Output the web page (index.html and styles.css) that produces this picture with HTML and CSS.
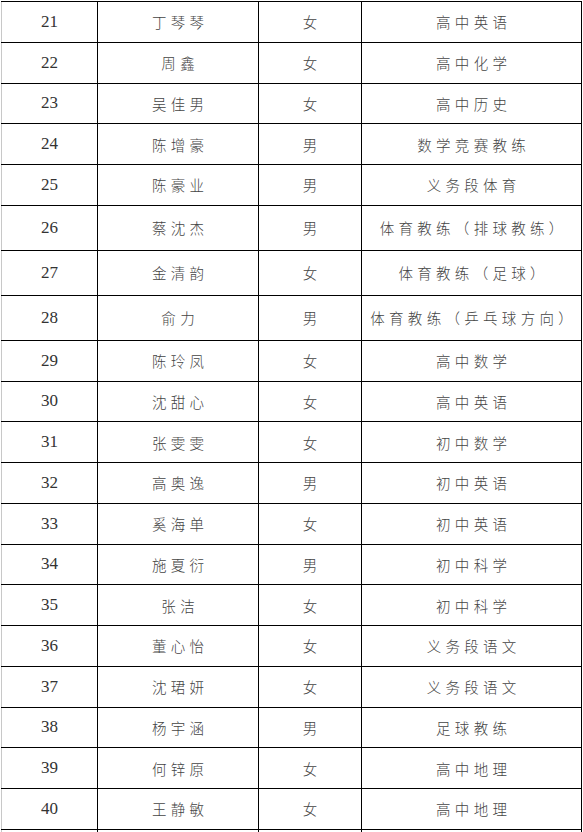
FILE: index.html
```html
<!DOCTYPE html>
<html lang="zh-CN">
<head>
<meta charset="utf-8">
<title>名单</title>
<link rel="stylesheet" href="styles.css">
</head>
<body>
<table class="roster">
  <colgroup>
    <col class="c-no"><col class="c-name"><col class="c-sex"><col class="c-subj">
  </colgroup>
  <tbody>
    <tr><td class="no">21</td><td class="cn"><span>丁琴琴</span></td><td class="cn"><span>女</span></td><td class="cn"><span>高中英语</span></td></tr>
    <tr><td class="no">22</td><td class="cn"><span>周鑫</span></td><td class="cn"><span>女</span></td><td class="cn"><span>高中化学</span></td></tr>
    <tr><td class="no">23</td><td class="cn"><span>吴佳男</span></td><td class="cn"><span>女</span></td><td class="cn"><span>高中历史</span></td></tr>
    <tr><td class="no">24</td><td class="cn"><span>陈增豪</span></td><td class="cn"><span>男</span></td><td class="cn"><span>数学竞赛教练</span></td></tr>
    <tr><td class="no">25</td><td class="cn"><span>陈豪业</span></td><td class="cn"><span>男</span></td><td class="cn"><span>义务段体育</span></td></tr>
    <tr class="tall"><td class="no">26</td><td class="cn"><span>蔡沈杰</span></td><td class="cn"><span>男</span></td><td class="cn"><span>体育教练（排球教练）</span></td></tr>
    <tr class="tall"><td class="no">27</td><td class="cn"><span>金清韵</span></td><td class="cn"><span>女</span></td><td class="cn"><span>体育教练（足球）</span></td></tr>
    <tr class="tall"><td class="no">28</td><td class="cn"><span>俞力</span></td><td class="cn"><span>男</span></td><td class="cn"><span>体育教练（乒乓球方向）</span></td></tr>
    <tr><td class="no">29</td><td class="cn"><span>陈玲凤</span></td><td class="cn"><span>女</span></td><td class="cn"><span>高中数学</span></td></tr>
    <tr><td class="no">30</td><td class="cn"><span>沈甜心</span></td><td class="cn"><span>女</span></td><td class="cn"><span>高中英语</span></td></tr>
    <tr><td class="no">31</td><td class="cn"><span>张雯雯</span></td><td class="cn"><span>女</span></td><td class="cn"><span>初中数学</span></td></tr>
    <tr><td class="no">32</td><td class="cn"><span>高奥逸</span></td><td class="cn"><span>男</span></td><td class="cn"><span>初中英语</span></td></tr>
    <tr><td class="no">33</td><td class="cn"><span>奚海单</span></td><td class="cn"><span>女</span></td><td class="cn"><span>初中英语</span></td></tr>
    <tr><td class="no">34</td><td class="cn"><span>施夏衍</span></td><td class="cn"><span>男</span></td><td class="cn"><span>初中科学</span></td></tr>
    <tr><td class="no">35</td><td class="cn"><span>张洁</span></td><td class="cn"><span>女</span></td><td class="cn"><span>初中科学</span></td></tr>
    <tr><td class="no">36</td><td class="cn"><span>董心怡</span></td><td class="cn"><span>女</span></td><td class="cn"><span>义务段语文</span></td></tr>
    <tr><td class="no">37</td><td class="cn"><span>沈珺妍</span></td><td class="cn"><span>女</span></td><td class="cn"><span>义务段语文</span></td></tr>
    <tr><td class="no">38</td><td class="cn"><span>杨宇涵</span></td><td class="cn"><span>男</span></td><td class="cn"><span>足球教练</span></td></tr>
    <tr><td class="no">39</td><td class="cn"><span>何锌原</span></td><td class="cn"><span>女</span></td><td class="cn"><span>高中地理</span></td></tr>
    <tr><td class="no">40</td><td class="cn"><span>王静敏</span></td><td class="cn"><span>女</span></td><td class="cn"><span>高中地理</span></td></tr>
    <tr><td class="no"></td><td class="cn"></td><td class="cn"></td><td class="cn"></td></tr>
  </tbody>
</table>
</body>
</html>
```
FILE: styles.css
```css
html, body {
  margin: 0;
  padding: 0;
  background: #ffffff;
}

body {
  padding: 1px 0 0 1px;
}

.roster {
  border-collapse: collapse;
  table-layout: fixed;
  width: 580px;
}

.c-no { width: 96px; }
.c-name { width: 161px; }
.c-sex { width: 103px; }
.c-subj { width: 220px; }

.roster td {
  border: 1px solid #000;
  padding: 0;
  text-align: center;
  vertical-align: middle;
  height: 40.75px;
  box-sizing: border-box;
}

.roster tr td:first-child {
  border-left-color: #c8c8c8;
}

.roster tr.tall td {
  height: 45px;
}

.no {
  font-family: "Liberation Serif", "DejaVu Serif", serif;
  font-size: 17px;
  color: #333;
}

.cn {
  font-family: "Noto Sans CJK SC", "Noto Sans", sans-serif;
  font-weight: 300;
  font-size: 14.5px;
  color: #444;
}

.cn span {
  letter-spacing: 4.3px;
  margin-right: -4.3px;
}
```
